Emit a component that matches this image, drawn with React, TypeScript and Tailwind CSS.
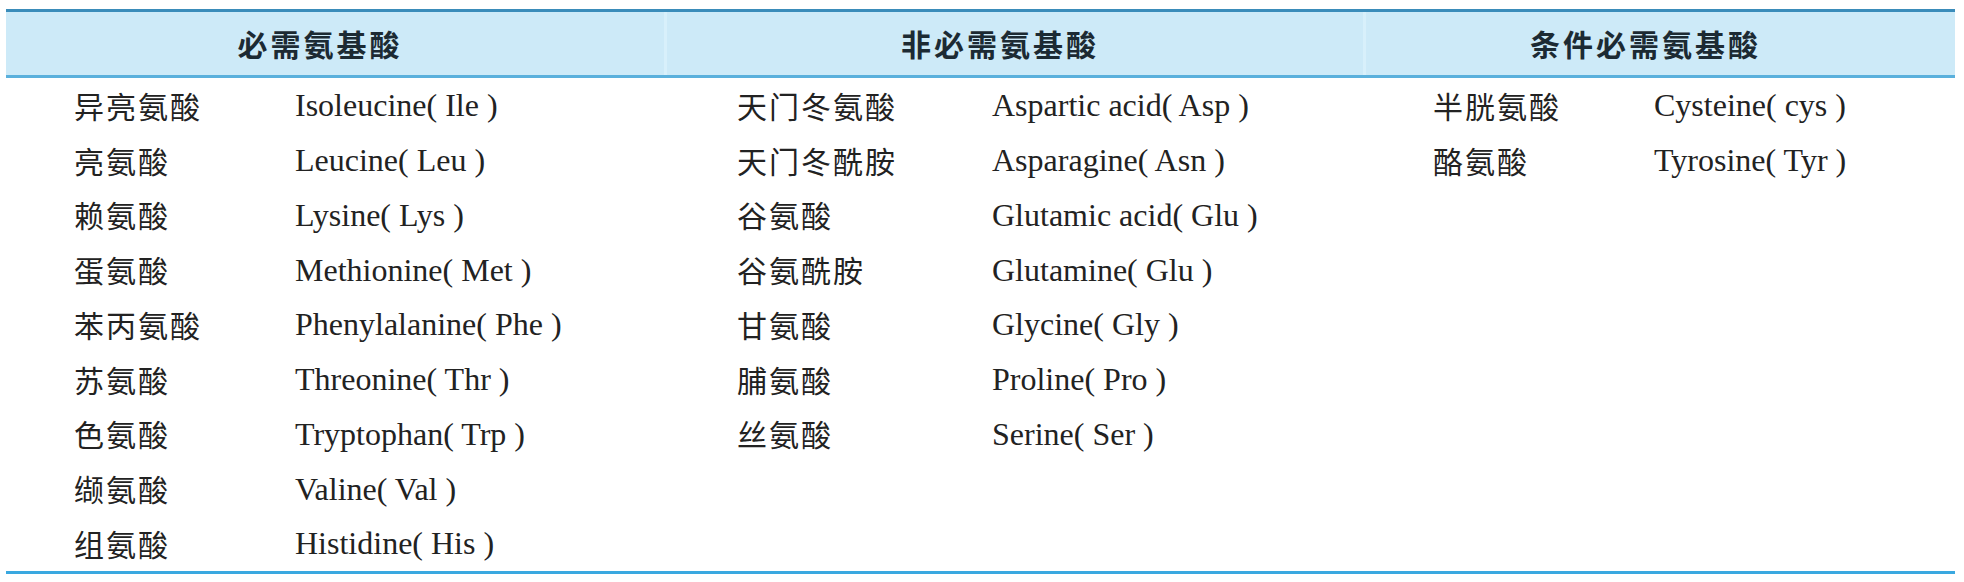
import React from "react";

const cols = [
  {
    title: "必需氨基酸",
    pl: "pl-[68px]",
    cw: "w-[221px]",
    rows: [
      ["异亮氨酸", "Isoleucine( Ile )"],
      ["亮氨酸", "Leucine( Leu )"],
      ["赖氨酸", "Lysine( Lys )"],
      ["蛋氨酸", "Methionine( Met )"],
      ["苯丙氨酸", "Phenylalanine( Phe )"],
      ["苏氨酸", "Threonine( Thr )"],
      ["色氨酸", "Tryptophan( Trp )"],
      ["缬氨酸", "Valine( Val )"],
      ["组氨酸", "Histidine( His )"],
    ],
  },
  {
    title: "非必需氨基酸",
    pl: "pl-[70px]",
    cw: "w-[255px]",
    rows: [
      ["天门冬氨酸", "Aspartic acid( Asp )"],
      ["天门冬酰胺", "Asparagine( Asn )"],
      ["谷氨酸", "Glutamic acid( Glu )"],
      ["谷氨酰胺", "Glutamine( Glu )"],
      ["甘氨酸", "Glycine( Gly )"],
      ["脯氨酸", "Proline( Pro )"],
      ["丝氨酸", "Serine( Ser )"],
    ],
  },
  {
    title: "条件必需氨基酸",
    pl: "pl-[67px]",
    cw: "w-[221px]",
    rows: [
      ["半胱氨酸", "Cysteine( cys )"],
      ["酪氨酸", "Tyrosine( Tyr )"],
    ],
  },
];

const cjk = { fontFamily: '"Noto Sans CJK SC", sans-serif' };
const serif = { fontFamily: '"Liberation Serif", "Noto Sans CJK SC", serif' };

export default function App() {
  return (
    <div className="w-[1964px] h-[582px] bg-white pt-[9px] pl-[6px]">
      <div className="w-[1949px]">
        <div className="grid grid-cols-[661px_699px_589px] h-[69px] border-t-[3px] border-b-[3px] border-t-[#3a8cba] border-b-[#5ab0dc] bg-[#cdeaf8]">
          {cols.map((c, i) => (
            <div
              key={i}
              className={`flex items-center justify-center pr-[30px] ${i < 2 ? "border-r-[3px] border-r-[#d8f0fb]" : ""}`}
            >
              <span
                className="text-[30px] font-bold text-[#1c2a33] tracking-[3px]"
                style={cjk}
              >
                {c.title}
              </span>
            </div>
          ))}
        </div>
        <div className="grid grid-cols-[661px_699px_589px] h-[493px] items-start">
          {cols.map((c, i) => (
            <div key={i} className={`flex flex-col ${c.pl}`}>
              {c.rows.map(([zh, en], j) => (
                <div key={j} className="flex items-center h-[54.75px] text-[#222]">
                  <span className={`${c.cw} text-[30px] tracking-[2px]`} style={cjk}>
                    {zh}
                  </span>
                  <span className="text-[32px] whitespace-pre" style={serif}>
                    {en}
                  </span>
                </div>
              ))}
            </div>
          ))}
        </div>
        <div className="h-[3px] bg-[#3aa8e0]" />
      </div>
    </div>
  );
}
